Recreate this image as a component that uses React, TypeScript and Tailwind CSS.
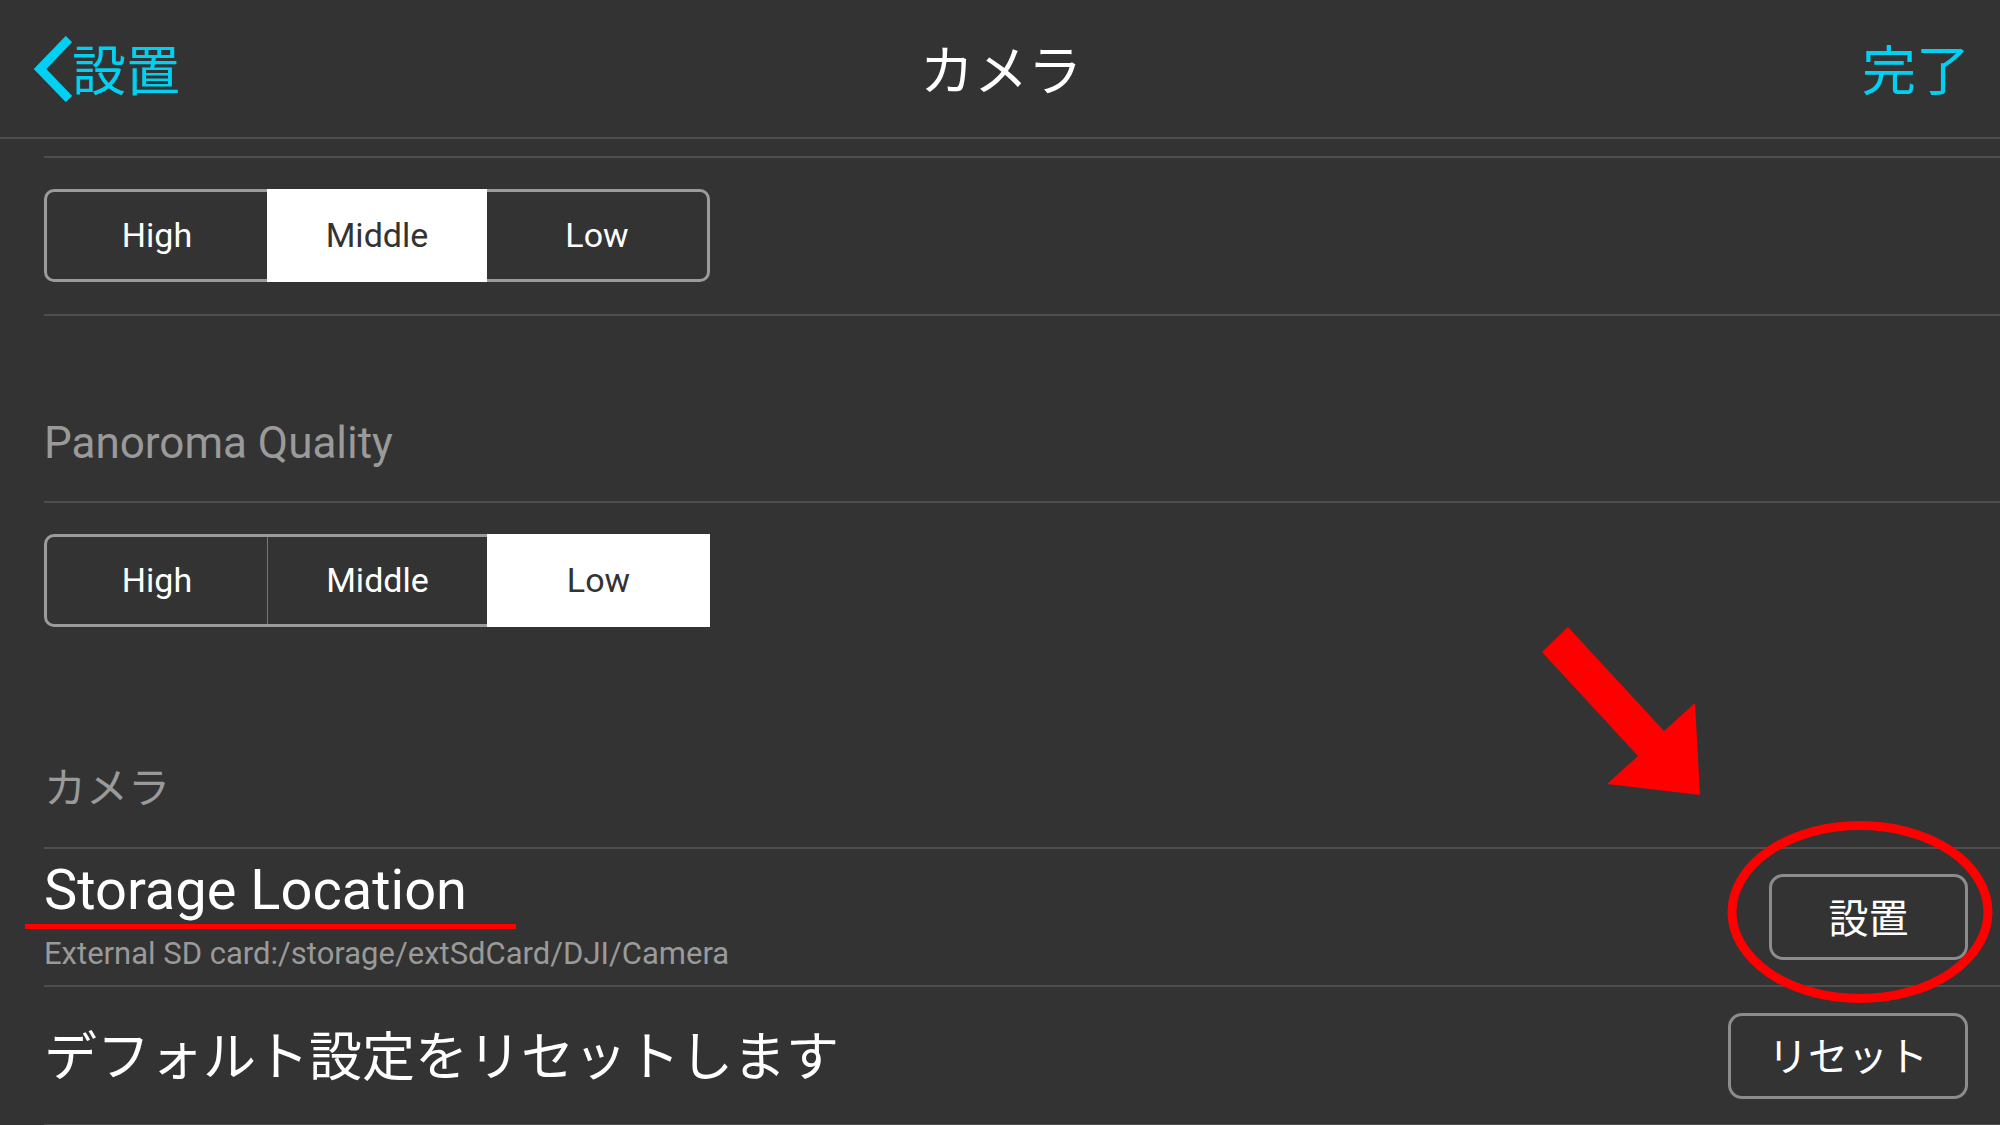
import clsx from "clsx";

const options = ["High", "Middle", "Low"];

function Segmented({ selected }: { selected: number }) {
  return (
    <div className="flex h-[93px] w-[666px] rounded-[10px] border-[3px] border-[#9b9b9b]">
      {options.map((label, i) => {
        const active = i === selected;
        const last = i === options.length - 1;
        const divider = i > 0 && !active && i - 1 !== selected;
        return (
          <div
            key={label}
            className={clsx(
              "flex items-center justify-center text-[34px]",
              active ? "-my-[3px] bg-white text-[#333333]" : "text-white",
              active && last ? "-mr-[3px] w-[223px]" : "w-[220px]",
              divider && "border-l border-[#777777]"
            )}
          >
            {label}
          </div>
        );
      })}
    </div>
  );
}

function Chevron() {
  return (
    <svg width="40" height="66" viewBox="0 0 40 66" className="shrink-0">
      <polyline
        points="37,3 8,33 37,63"
        fill="none"
        stroke="#00d0f2"
        strokeWidth="9"
        strokeLinejoin="miter"
      />
    </svg>
  );
}

export default function App() {
  return (
    <div className="relative h-[1125px] w-[2000px] overflow-hidden bg-[#333333] font-['Roboto','Noto_Sans_CJK_JP',sans-serif] text-white">
      {/* top bar */}
      <header className="grid h-[139px] grid-cols-[1fr_auto_1fr] items-center border-b-2 border-[#4e4e4e] pl-[32px] pr-[30px]">
        <div className="flex items-center">
          <Chevron />
          <span className="mt-[8px] block text-[54px] leading-[54px] text-[#00d0f2]">設置</span>
        </div>
        <div className="mt-[8px] text-[54px] leading-[54px]">カメラ</div>
        <div className="mt-[8px] text-right text-[54px] leading-[54px] text-[#00d0f2]">完了</div>
      </header>
      <div className="h-[17px]" />

      <div className="ml-[44px]">
        <div className="h-[158px] border-t-2 border-[#4e4e4e] pt-[31px]">
          <Segmented selected={1} />
        </div>

        <div className="flex h-[187px] items-end border-t-2 border-[#4e4e4e] pb-[34px]">
          <div className="text-[44px] leading-[48px] text-[#9a9a9a]">Panoroma Quality</div>
        </div>

        <div className="h-[346px] border-t-2 border-[#4e4e4e] pt-[31px]">
          <Segmented selected={2} />
          <div className="mt-[142px] text-[42px] leading-[40px] text-[#9a9a9a]">カメラ</div>
        </div>

        <div className="flex h-[138px] items-center justify-between border-t-2 border-[#4e4e4e] pb-[5px] pr-[32px]">
          <div className="flex flex-col">
            <div className="text-[56px] leading-[64px]">Storage Location</div>
            <div className="mt-[14px] text-[31px] leading-[36px] text-[#9a9a9a]">
              External SD card:/storage/extSdCard/DJI/Camera
            </div>
          </div>
          <button className="mt-[5px] flex h-[86px] w-[199px] items-center justify-center rounded-[14px] border-[3px] border-[#8c8c8c] pt-[5px] text-[40px] text-white">
            設置
          </button>
        </div>

        <div className="flex h-[139px] items-center justify-between border-t-2 border-[#4e4e4e] pr-[32px]">
          <div className="mt-[6px] text-[53px] leading-[53px]">デフォルト設定をリセットします</div>
          <button className="flex h-[86px] w-[240px] items-center justify-center rounded-[14px] border-[3px] border-[#8c8c8c] pt-[5px] text-[40px] text-white">
            リセット
          </button>
        </div>
        <div className="h-[2px] bg-[#4e4e4e]" />
      </div>

      {/* red annotations */}
      <svg
        className="pointer-events-none absolute left-0 top-0"
        width="2000"
        height="1125"
        viewBox="0 0 2000 1125"
      >
        <polygon
          points="1568,627 1664,731 1695,703 1700,795 1607,784 1638,756 1542,652"
          fill="#ff0000"
        />
        <ellipse cx="1860" cy="912" rx="128" ry="86.5" fill="none" stroke="#ff0000" strokeWidth="9" />
        <rect x="25" y="924" width="491" height="5" fill="#ff0000" />
      </svg>
    </div>
  );
}
